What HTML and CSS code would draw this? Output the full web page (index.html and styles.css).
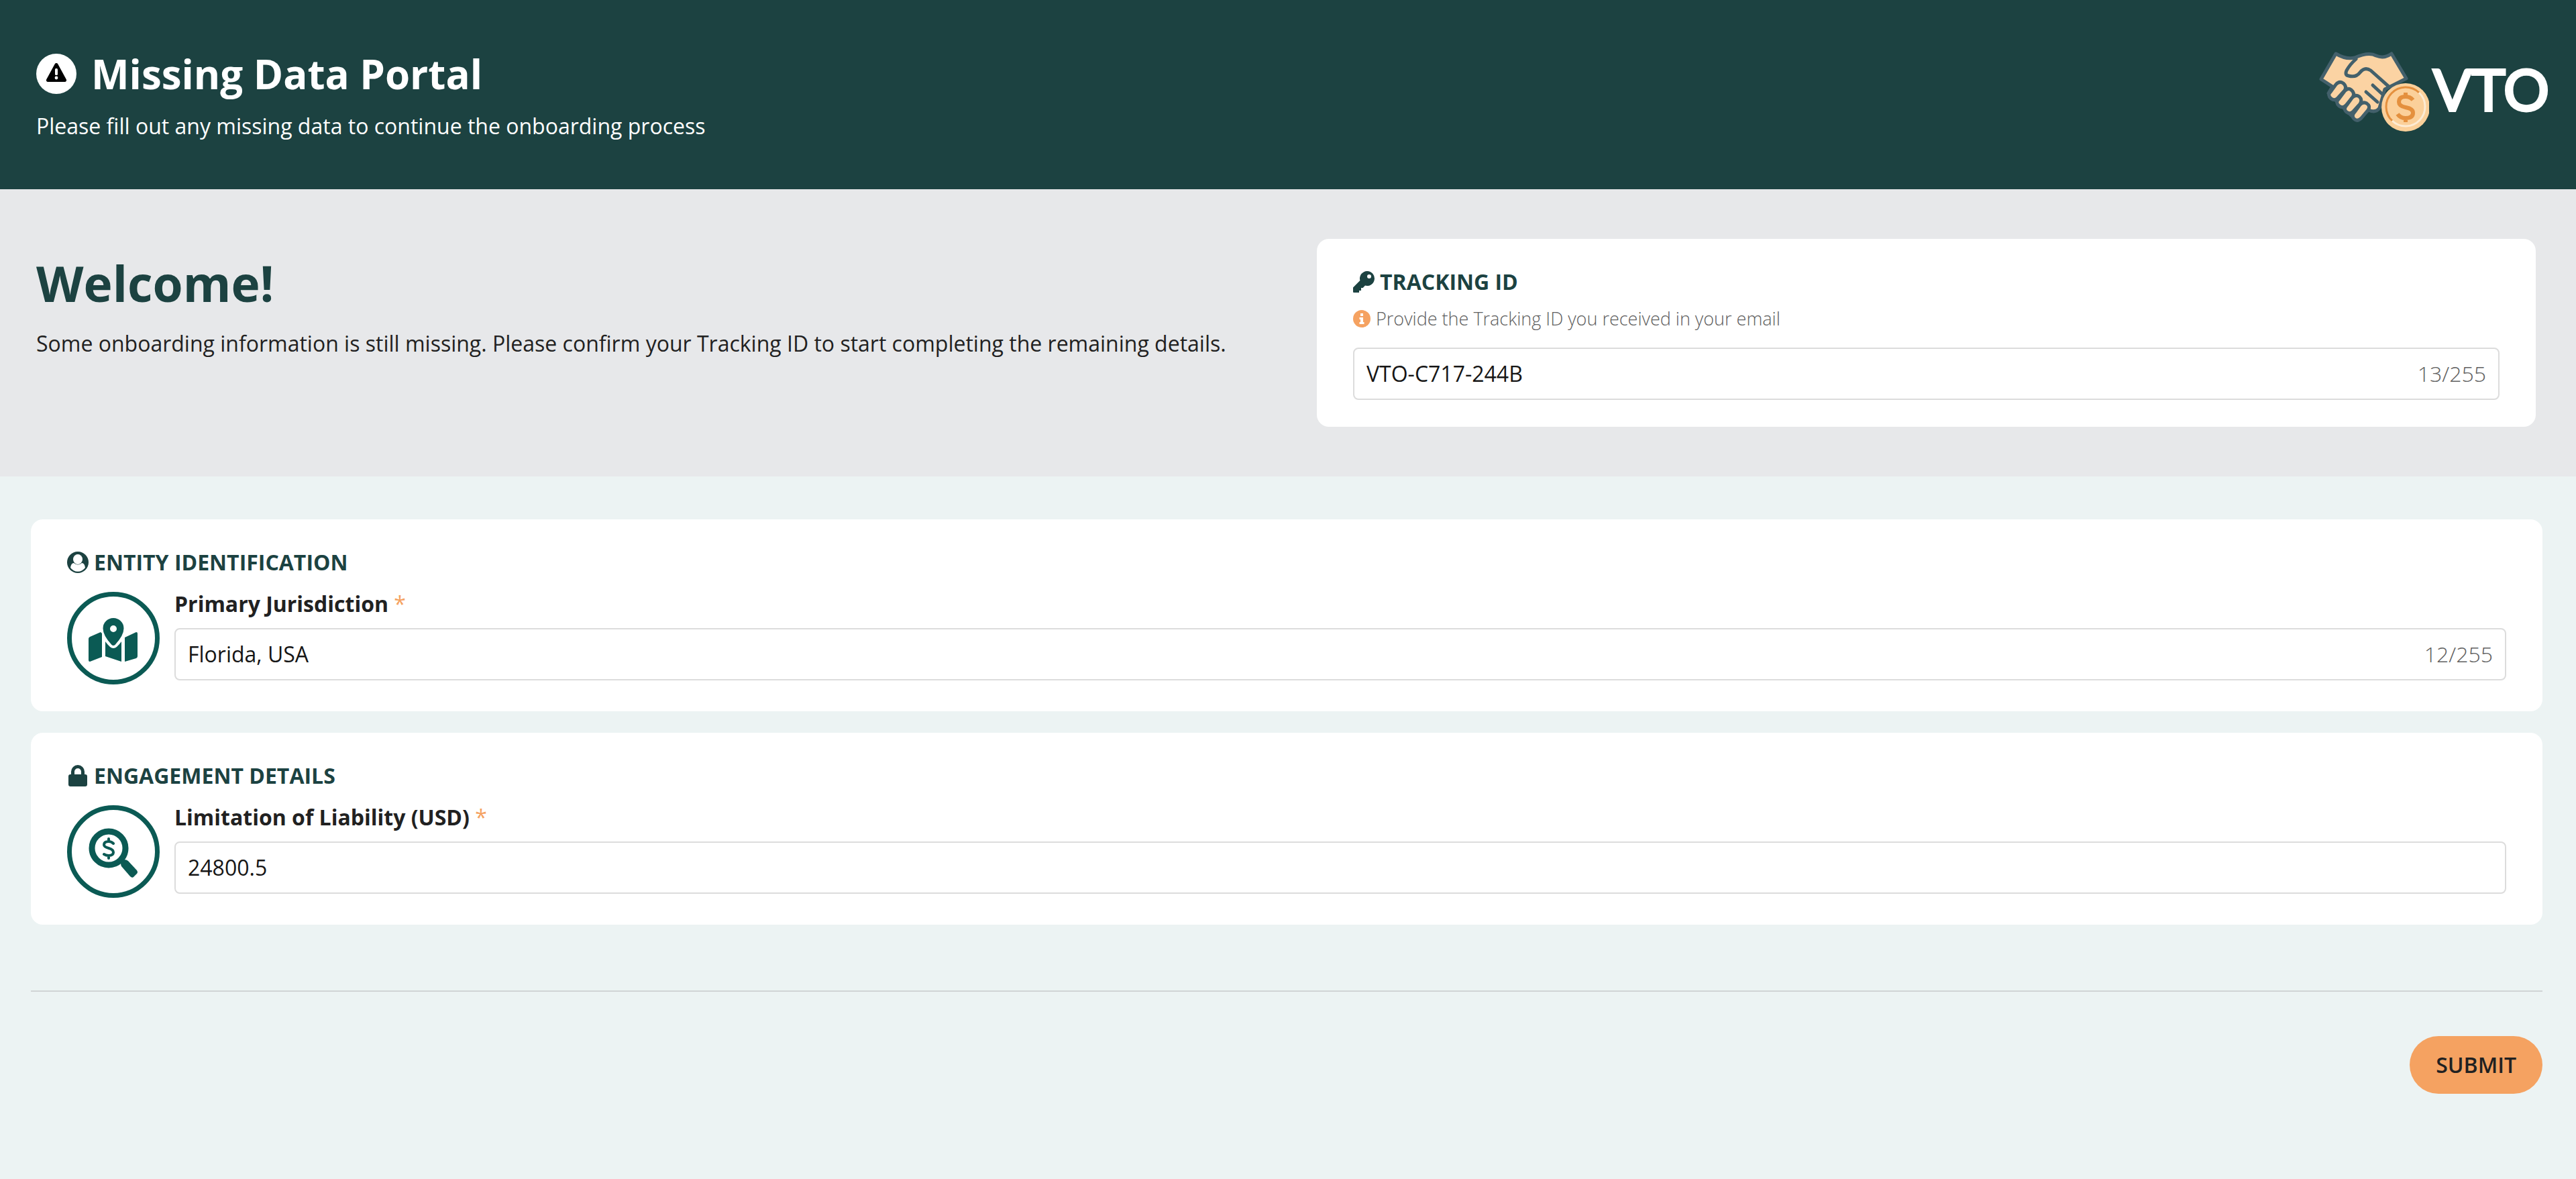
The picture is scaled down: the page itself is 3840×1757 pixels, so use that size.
FILE: index.html
```
<!DOCTYPE html>
<html lang="en">
<head>
<meta charset="utf-8">
<meta name="viewport" content="width=device-width, initial-scale=1">
<title>Missing Data Portal</title>
<link rel="stylesheet" href="styles.css">
</head>
<body>
<header class="masthead">
  <div class="masthead-text">
    <h1 class="masthead-title">
      <svg class="alert-icon" viewBox="0 0 60 60" aria-hidden="true"><circle cx="30" cy="30" r="30" fill="#fff"/><path d="M30 14a2.500 2.500 0 0 1 2.200 1.300L44.600 38a2.500 2.500 0 0 1-2.200 4H17.600a2.500 2.500 0 0 1-2.200-4L27.800 15.300A2.500 2.500 0 0 1 30 14z" fill="#000"/><rect x="28" y="22" width="4" height="10" rx="1.500" fill="#fff"/><circle cx="30" cy="36" r="2.400" fill="#fff"/></svg>
      <span>Missing Data Portal</span>
    </h1>
    <p class="lead">Please fill out any missing data to continue the onboarding process</p>
  </div>
  <div class="brand">
    <svg class="brand-mark" viewBox="0 0 164 119" role="img" aria-label="Handshake and coin">
      <g fill="#fbd3a3" stroke="#43606b" stroke-width="5" stroke-linejoin="round" stroke-linecap="round">
        <path d="M25 3Q40 12 53 9Q74 0 85 6Q97 11 108 3L130 40L98 56L90 84Q84 92 74 87L59 98Q54 101 48 95L14 62L20 52L3 41Z"/>
        <path d="M55 11Q46 19 41 28Q38 35 44 36Q55 39 61 31Q68 22 77 28L104 52" fill="none"/>
        <path d="M80 50L94 63M70 60L87 75" fill="none"/>
        <path d="M17 60Q12 65 18 70Q23 74 28 69L38 58Q42 52 36 47Q30 43 25 49Z"/>
        <path d="M29 71Q24 76 30 81Q35 85 40 80L50 68Q54 62 48 57Q43 53 38 59Z"/>
        <path d="M41 80Q36 86 41 90Q46 94 51 89L61 78Q65 72 60 67Q54 63 49 69Z"/>
        <path d="M53 90Q48 96 52 100Q57 105 63 99L73 87Q77 81 71 77Q66 74 61 79Z"/>
      </g>
      <circle cx="129" cy="83" r="36" fill="#fbd09a"/>
      <path d="M109 103A28 28 0 0 1 149 61" fill="none" stroke="#e4903e" stroke-width="3"/>
      <path d="M149 61A28 28 0 0 1 109 103" fill="none" stroke="#fdebd3" stroke-width="3"/>
      <path d="M140 72Q136 67 129 67Q119 67 119 75Q119 81 129 83Q140 85 140 91Q140 99 129 99Q121 99 117 93M129 61V67M129 99V105" fill="none" stroke="#e4903e" stroke-width="6"/>
    </svg>
    <span class="brand-name">VTO</span>
  </div>
</header>
<form class="portal">
  <section class="welcome">
    <div class="welcome-text">
      <h2 class="welcome-title">Welcome!</h2>
      <p class="lead">Some onboarding information is still missing. Please confirm your Tracking ID to start completing the remaining details.</p>
    </div>
    <div class="card tracking">
      <h3 class="card-title"><svg class="icon" viewBox="0 0 16 16" aria-hidden="true"><path fill="currentColor" fill-rule="evenodd" d="M10.500 0a5.500 5.500 0 0 0-5.300 7L0 12.200V15.500q0 .5.500.5H4.500v-1.500h1.500v-2h1.300L9 10.800A5.500 5.500 0 1 0 10.500 0zM12 5.500a1.500 1.500 0 1 1 0-3 1.500 1.500 0 0 1 0 3z"/></svg><label for="tracking">TRACKING ID</label></h3>
      <p class="hint" id="tracking-hint"><svg class="info-icon" viewBox="0 0 26 26" aria-hidden="true"><circle cx="13" cy="13" r="13" fill="#f5a261"/><path d="M11 5h4v4h-4zM9.500 11h5.500v7h1.500v3H9.500v-3h1.500v-4H9.500z" fill="#fff"/></svg>Provide the Tracking ID you received in your email</p>
      <div class="field"><input class="field-input" id="tracking" type="text" value="VTO-C717-244B" maxlength="255" aria-describedby="tracking-hint"><span class="counter">13/255</span></div>
    </div>
  </section>
  <div class="details">
    <section class="card">
      <h3 class="card-title"><svg class="icon" viewBox="0 0 32 32" aria-hidden="true"><circle cx="16" cy="16" r="16" fill="currentColor"/><ellipse cx="16" cy="11.500" rx="7" ry="7.500" fill="#fff"/><path d="M5 24Q6 17 10 17Q16 22 22 17Q26 17 27 24A13.500 13.500 0 0 1 5 24z" fill="#fff"/></svg><span>ENTITY IDENTIFICATION</span></h3>
      <div class="entry">
        <svg class="badge" viewBox="0 0 138 138" aria-hidden="true"><circle cx="69" cy="69" r="65.500" fill="none" stroke="currentColor" stroke-width="7"/><path fill="currentColor" d="M34 67L50 60L52 62V97L34 104Q32 104 32 102V70Q32 68 34 67zM57 74Q64 84 69 84Q74 84 81 74V104L57 96zM86 68L103 60Q105 60 105 62V96Q105 98 103 99L86 104z"/><path fill="currentColor" stroke="#fff" stroke-width="3" paint-order="stroke" fill-rule="evenodd" d="M69 39A15.500 15.500 0 0 0 53.500 54.500Q53.500 65 66.500 79Q69 81 71.500 79Q84.500 65 84.500 54.500A15.500 15.500 0 0 0 69 39zM69 60a5 5 0 1 1 0-10 5 5 0 0 1 0 10z"/></svg>
        <div class="entry-body">
          <label class="entry-label" for="jurisdiction">Primary Jurisdiction <span class="required">*</span></label>
          <div class="field"><input class="field-input" id="jurisdiction" type="text" value="Florida, USA" maxlength="255" required><span class="counter">12/255</span></div>
        </div>
      </div>
    </section>
    <section class="card">
      <h3 class="card-title"><svg class="icon" viewBox="0 0 32 32" aria-hidden="true"><path fill="currentColor" fill-rule="evenodd" d="M6 14V10a10 10 0 0 1 20 0v4h1q3 0 3 3v12q0 3-3 3H5q-3 0-3-3V17q0-3 3-3zM11 14h10V10a5 5 0 0 0-10 0z"/></svg><span>ENGAGEMENT DETAILS</span></h3>
      <div class="entry">
        <svg class="badge" viewBox="0 0 138 138" aria-hidden="true"><circle cx="69" cy="69" r="65.500" fill="none" stroke="currentColor" stroke-width="7"/><g fill="none" stroke="currentColor"><circle cx="62" cy="64" r="25" stroke-width="9"/><path d="M69 57Q66 54 62 54Q55 54 55 59Q55 62 62 64Q69 66 69 70Q69 75 62 75Q58 75 55 73M62 50V54M62 75V79" stroke-width="4" stroke-linecap="round"/></g><path fill="currentColor" d="M80 86Q80 82 85 81Q89 81 91 83L104 97Q106 100 104 102L99 107Q97 109 94 106L81 91Q80 89 80 86z"/></svg>
        <div class="entry-body">
          <label class="entry-label" for="liability">Limitation of Liability (USD) <span class="required">*</span></label>
          <div class="field"><input class="field-input" id="liability" type="text" inputmode="decimal" value="24800.5" required></div>
        </div>
      </div>
    </section>
    <footer class="actions"><button class="submit" type="submit">SUBMIT</button></footer>
  </div>
</form>
</body>
</html>
```
FILE: styles.css
```
* { box-sizing: border-box; }
body {
  margin: 0;
  min-height: 100vh;
  background: #ecf3f3;
  color: #212121;
  font: 32px/48px "Open Sans", sans-serif;
}
h1, h2, h3, p { margin: 0; }
.masthead {
  display: flex;
  justify-content: space-between;
  align-items: center;
  padding: 64px 40px 64px 54px;
  background: #1c4241;
  color: #fff;
}
.masthead-title {
  display: flex;
  align-items: center;
  gap: 22px;
  font-size: 60px;
  line-height: 92px;
}
.alert-icon { width: 60px; height: 60px; }
.lead { padding-top: 10px; }
.masthead .lead { padding: 8px 0 6px; }
.brand {
  display: flex;
  align-items: center;
  gap: 6px;
  margin-bottom: 10px;
}
.brand-mark { width: 164px; height: 119px; }
.brand-name {
  padding-bottom: 8px;
  font: 400 85px/100px Lato, sans-serif;
  -webkit-text-stroke: 4px #fff;
  stroke-linejoin: round;
}
.welcome {
  display: grid;
  grid-template-columns: 1fr 1fr;
  gap: 92px;
  padding: 74px 60px 74px 54px;
  background: #e7e8ea;
}
.welcome-text { padding-top: 10px; }
.welcome-title { color: #1c4241; font-size: 73px; line-height: 112px; }
.card { padding: 40px 54px; border-radius: 18px; background: #fff; }
.card-title {
  display: flex;
  align-items: center;
  gap: 8px;
  color: #1c4241;
  font-size: 32px;
  line-height: 48px;
}
.icon { width: 32px; height: 32px; }
.hint {
  display: flex;
  align-items: center;
  gap: 8px;
  padding: 8px 0 20px;
  color: #606060;
  font-size: 27px;
  font-weight: 300;
  line-height: 46px;
}
.info-icon { width: 26px; height: 26px; }
.field {
  display: flex;
  align-items: center;
  height: 78px;
  padding: 0 18px;
  border: 2px solid #dcdcdc;
  border-radius: 8px;
  background: #fff;
}
.field:focus-within { border-color: #0b5a54; }
.field-input {
  flex: 1;
  min-width: 0;
  padding: 0;
  border: 0;
  outline: 0;
  background: none;
  color: #161616;
  font: inherit;
}
.counter { color: #606060; font-weight: 300; }
.details { display: grid; gap: 32px; padding: 64px 50px 126px 46px; }
.entry { display: flex; gap: 22px; padding-top: 20px; }
.badge { flex: none; width: 138px; height: 138px; color: #0b5a54; }
.entry-body { flex: 1; min-width: 0; }
.entry-label { display: block; padding-bottom: 18px; font-weight: 700; line-height: 36px; }
.required { color: #f5a261; font-weight: 400; }
.actions {
  display: flex;
  justify-content: flex-end;
  margin-top: 66px;
  padding-top: 66px;
  border-top: 2px solid #d0d4d5;
}
.submit {
  padding: 19px 39px;
  border: 0;
  border-radius: 44px;
  background: #f5a261;
  color: #212121;
  font: 600 32px/48px "Open Sans", sans-serif;
}
```
